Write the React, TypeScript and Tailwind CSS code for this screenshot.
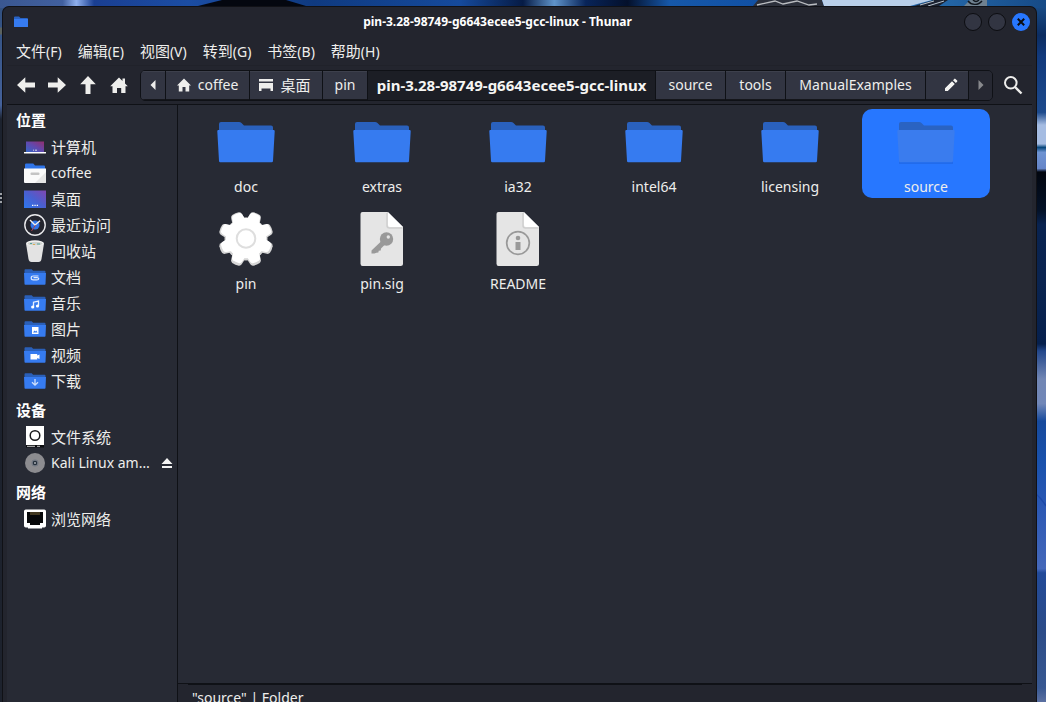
import type { ReactNode } from "react";

const LINE = "border-[#0f1116]";

function Wallpaper() {
  return (
    <svg className="absolute inset-0 h-full w-full" viewBox="0 0 1046 702" preserveAspectRatio="none" aria-hidden="true">
      <defs>
        <linearGradient id="wp-top" x1="0" x2="1" y1="0" y2="0">
          <stop offset="0" stopColor="#3a5790" />
          <stop offset="0.06" stopColor="#41609f" />
          <stop offset="0.073" stopColor="#8fb0ee" />
          <stop offset="0.09" stopColor="#1a3f92" />
          <stop offset="0.18" stopColor="#1b4da3" />
          <stop offset="0.3" stopColor="#0f3a80" />
          <stop offset="0.44" stopColor="#154a9c" />
          <stop offset="0.5" stopColor="#061b45" />
          <stop offset="0.53" stopColor="#5f93c9" />
          <stop offset="0.56" stopColor="#082459" />
          <stop offset="0.6" stopColor="#04102b" />
          <stop offset="0.64" stopColor="#1658a9" />
          <stop offset="0.72" stopColor="#1151a5" />
          <stop offset="0.9" stopColor="#2467a8" />
          <stop offset="1" stopColor="#164a86" />
        </linearGradient>
        <linearGradient id="wp-left" x1="0" x2="0" y1="0" y2="1">
          <stop offset="0" stopColor="#31507f" />
          <stop offset="0.14" stopColor="#44619a" />
          <stop offset="0.16" stopColor="#1c222e" />
          <stop offset="1" stopColor="#1d222d" />
        </linearGradient>
        <linearGradient id="wp-right" gradientUnits="userSpaceOnUse" x1="0" x2="0" y1="0" y2="702">
          <stop offset="0" stopColor="#1b528e" />
          <stop offset="0.05" stopColor="#0c2d61" />
          <stop offset="0.08" stopColor="#123a7c" />
          <stop offset="0.16" stopColor="#1d4a8c" />
          <stop offset="0.178" stopColor="#a5bce2" />
          <stop offset="0.205" stopColor="#a5bce2" />
          <stop offset="0.21" stopColor="#07467a" />
          <stop offset="0.217" stopColor="#6e93d2" />
          <stop offset="0.24" stopColor="#6585c8" />
          <stop offset="0.245" stopColor="#02060f" />
          <stop offset="0.3" stopColor="#041228" />
          <stop offset="0.32" stopColor="#092350" />
          <stop offset="0.4" stopColor="#0a2450" />
          <stop offset="0.49" stopColor="#06204d" />
          <stop offset="0.5" stopColor="#23478a" />
          <stop offset="0.54" stopColor="#7186b4" />
          <stop offset="0.575" stopColor="#7187b8" />
          <stop offset="0.6" stopColor="#174a9c" />
          <stop offset="0.66" stopColor="#1a52ad" />
          <stop offset="0.72" stopColor="#2b58b4" />
          <stop offset="0.81" stopColor="#4568ba" />
          <stop offset="0.816" stopColor="#224a99" />
          <stop offset="0.9" stopColor="#2c4c88" />
          <stop offset="0.98" stopColor="#385891" />
          <stop offset="1" stopColor="#5b70a1" />
        </linearGradient>
      </defs>
      <rect width="1046" height="702" fill="url(#wp-top)" />
      <rect y="8" width="4" height="694" fill="url(#wp-left)" />
      <path d="M198 6 222 0 286 0 306 6Z" fill="#04070f" />
      <path d="M753 6 758 0h64l2 6Z" fill="#2b2f3a" />
      <path d="M757 5 775 1l8 3 14-3 12 4 8-1" fill="none" stroke="#b9bcc0" strokeWidth="1.3" />
      <path d="M822 0h110l-22 6h-86Z" fill="#b9cfe9" />
      <path d="M914 6 934 0h14l-9 6Z" fill="#1b2230" />
      <path d="M920 5 934 1M928 6 944 1" stroke="#b9c4cf" strokeWidth="1" />
      <path d="M964 6 970 0h17v6Z" fill="#6f8190" />
      <path d="M968 1c3 4 10 5 14 0M973 0c2 2 4 2 6 0" fill="none" stroke="#10151c" strokeWidth="1.4" />
      <rect x="1035" y="8" width="11" height="694" fill="url(#wp-right)" />
      <path d="M1036 494q5 4 10 12" fill="none" stroke="#1d49a8" strokeWidth="1.5" />
      <path d="M0 194h2M0 198h2M0 202h2" stroke="#c9cbd0" strokeWidth="1.5" />
      <path d="M0 31h3" stroke="#5b625e" strokeWidth="7" />
    </svg>
  );
}

function FolderGlyph({ selected = false }: { selected?: boolean }) {
  return (
    <svg width="64" height="64" viewBox="0 0 64 64" aria-hidden="true">
      {selected && <path d="M5 22h54v33H5z" fill="#1d62dd" opacity=".55" />}
      <path d="M5 24V15q0-2 2-2h18q1.500 0 2.500 1l2.500 2.500H57q2 0 2 2V24Z" fill={selected ? "#2a63c2" : "#2a61bd"} />
      <path d="M4.500 21h55q1.300 0 1.200 1.300L59 52q-.1 1.300-1.300 1.300H6.300Q5.100 53.300 5 52L3.300 22.300Q3.200 21 4.500 21Z" fill={selected ? "#3a7cee" : "#367bf0"} />
    </svg>
  );
}

const TEETH = [22.5, 67.5, 112.5, 157.5, 202.5, 247.5, 292.5, 337.5];

function Teeth({ fill }: { fill: string }) {
  return (
    <g fill={fill}>
      <circle cx="32" cy="32" r="21.500" />
      {TEETH.map((angle) => (
        <path key={angle} transform={`rotate(${angle} 32 32)`} d="M25 14 26.300 7Q26.800 5 28.500 4.600 32 3.800 35.500 4.600 37.200 5 37.700 7L39 14Z" />
      ))}
    </g>
  );
}

function GearGlyph() {
  return (
    <svg width="64" height="64" viewBox="0 0 64 64" aria-hidden="true">
      <g transform="translate(0 1)">
        <Teeth fill="#d6d6d6" />
      </g>
      <g transform="translate(2 2) scale(.94)">
        <Teeth fill="#ffffff" />
      </g>
      <circle cx="32" cy="32.500" r="9.300" fill="#fff" stroke="#dedede" strokeWidth="2" />
    </svg>
  );
}

function Sheet({ children }: { children: ReactNode }) {
  return (
    <svg width="64" height="64" viewBox="0 0 64 64" aria-hidden="true">
      <path d="M12.500 6H37.500L53 21V57.500Q53 60 50.500 60h-38Q10.500 60 10.500 57.500V8Q10.500 6 12.500 6Z" fill="#e5e5e5" />
      <path d="M37 7v12.500Q37 22 39.500 22H52.500" fill="none" stroke="#cfcfcf" strokeWidth="1.500" />
      <path d="M38 6 53 21H40q-2 0-2-2Z" fill="#fff" />
      {children}
    </svg>
  );
}

function KeyGlyph() {
  return (
    <Sheet>
      <circle cx="36.500" cy="33" r="6.700" fill="#999" />
      <circle cx="38.300" cy="31" r="1.700" fill="#e5e5e5" />
      <path d="m31.500 35 3.500 3.500-4 4-.3 2-2 .2-.3 1.800-2 .3-2 .8H21.500v-3Z" fill="#999" />
    </Sheet>
  );
}

function InfoGlyph() {
  return (
    <Sheet>
      <circle cx="32" cy="37" r="11.300" fill="none" stroke="#999" strokeWidth="1.700" />
      <circle cx="32" cy="32" r="2.300" fill="#999" />
      <path d="M29.500 36h5v8h-5z" fill="#999" />
    </Sheet>
  );
}

function SmallIcon({ children }: { children: ReactNode }) {
  return (
    <svg width="24" height="24" viewBox="0 0 24 24" className="shrink-0" aria-hidden="true">
      {children}
    </svg>
  );
}

function SmallFolder({ children }: { children?: ReactNode }) {
  return (
    <SmallIcon>
      <path d="M1.500 6.500V5.200q0-.9.900-.9h6.300l1.400 1.500h11.500q.9 0 .9.900v2H1.500Z" fill="#2a5fb8" />
      <path d="M1 8h22l-.5 11q0 .8-.8.800H2.300q-.8 0-.8-.8Z" fill="#367bf0" />
      {children}
    </SmallIcon>
  );
}

const GRADIENT = (
  <defs>
    <linearGradient id="screen" x1="0" x2="1" y1="1" y2="0">
      <stop offset="0" stopColor="#2d78ee" />
      <stop offset="0.5" stopColor="#4a5fd0" />
      <stop offset="1" stopColor="#8047b0" />
    </linearGradient>
    <linearGradient id="laptop" x1="0" x2="1" y1="1" y2="0">
      <stop offset="0" stopColor="#3568c8" />
      <stop offset="0.5" stopColor="#6148ae" />
      <stop offset="1" stopColor="#932f6d" />
    </linearGradient>
  </defs>
);

const icons: Record<string, ReactNode> = {
  computer: (
    <SmallIcon>
      {GRADIENT}
      <path d="M3 6.500h18V17H3z" fill="url(#laptop)" />
      <path d="M10 15.200h1m1 0h2" stroke="#d9d9e8" />
      <path d="M1 17h22v1q0 .6-.6.600H1.600q-.6 0-.6-.6Z" fill="#fff" />
    </SmallIcon>
  ),
  home: (
    <SmallIcon>
      <path d="M2 8V3.800q0-1.300 1.300-1.300h7L12 4.500h9q1 0 1 1V9H2Z" fill="#2f74e8" />
      <path d="M1 7.500h22V21q0 1-1 1H2q-1 0-1-1Z" fill="#fafafa" />
      <path d="M23 11v10q0 1-1 1H12Z" fill="#e6e6e6" />
      <rect x="7.500" y="11.500" width="9" height="2.600" rx="1" fill="#c4c4c4" />
    </SmallIcon>
  ),
  desktop: (
    <SmallIcon>
      {GRADIENT}
      <path d="M1 3.500h22V21H1z" fill="url(#screen)" />
      <path d="M9 18.300h1.400m1 0h1.300m1 0H15" stroke="#fff" strokeWidth="1.200" />
    </SmallIcon>
  ),
  recent: (
    <SmallIcon>
      <circle cx="12" cy="12" r="10.200" fill="#24252e" stroke="#e9e9ec" strokeWidth="1.400" />
      <circle cx="12" cy="12" r="4.500" fill="#2f74e8" />
      <path d="m7 7 5 5 5-4.300" fill="none" stroke="#eee" strokeWidth="1.400" />
      <path d="m12.500 12-4 6" stroke="#a6404f" />
    </SmallIcon>
  ),
  trash: (
    <SmallIcon>
      <path d="M3 4.500 5.500 20q.5 3 3 3h7q2.500 0 3-3L21 4.500Z" fill="#e3e3e3" />
      <ellipse cx="12" cy="4.200" rx="9" ry="2.900" fill="#f4f4f4" />
      <ellipse cx="12" cy="4.600" rx="7.500" ry="1.900" fill="#cfd2cf" />
      <path d="M7 4.500h2m5 .5h3" stroke="#55a59a" />
      <path d="M10 5.500h2" stroke="#d7ae55" />
    </SmallIcon>
  ),
  documents: (
    <SmallFolder>
      <path d="M15.500 11H10.300q-2.100 0-2.100 1.900t2.100 1.900h3.600q1.800 0 1.800-1.100t-1.800-1H10.500" fill="none" stroke="#dce8fc" strokeWidth="1.200" />
    </SmallFolder>
  ),
  music: (
    <SmallFolder>
      <path d="M10.500 15.800v-4.600L15.500 10v4.800" fill="none" stroke="#e6effe" strokeWidth="1.300" />
      <circle cx="9.700" cy="16" r="1.600" fill="#fff" />
      <circle cx="14.500" cy="15" r="1.600" fill="#fff" />
    </SmallFolder>
  ),
  pictures: (
    <SmallFolder>
      <path d="M9 10h6.500v7H9z" fill="#fff" />
      <path d="m10 15.500 1.500-2 1 1 .8-1 1.200 2Z" fill="#367bf0" />
    </SmallFolder>
  ),
  videos: (
    <SmallFolder>
      <path d="M7.500 11h6.700v1.500l2.300-1v4.600l-2.300-1v1.500H7.500z" fill="#fff" />
    </SmallFolder>
  ),
  downloads: (
    <SmallFolder>
      <path d="M12 10v6m-3-2.800 3 3 3-3" fill="none" stroke="#cfe0fc" strokeWidth="1.300" />
    </SmallFolder>
  ),
  disk: (
    <SmallIcon>
      <path d="M3 1h18v19H3z" fill="#fff" />
      <path d="M3 20h18v2.500H3z" fill="#0c0d10" />
      <path d="M4 21.300h8m2 0h3" stroke="#c8c8c8" />
      <circle cx="12" cy="10.500" r="4.800" fill="#fff" stroke="#1a1a1c" strokeWidth="1.500" />
    </SmallIcon>
  ),
  disc: (
    <SmallIcon>
      <circle cx="12" cy="12" r="10" fill="#8c8c90" />
      <circle cx="12" cy="12" r="2.900" fill="#25303c" stroke="#737984" strokeWidth="1.200" />
      <circle cx="12" cy="12" r="1" fill="#a9adb5" />
    </SmallIcon>
  ),
  network: (
    <SmallIcon>
      <path d="M2.800 2.500h18.400Q23 2.500 23 4.300v14.400q0 1.800-1.800 1.800H19v1H5v-1H2.800Q1 20.500 1 18.700V4.300q0-1.800 1.800-1.800Z" fill="#fff" />
      <path d="M4 5h16v11h-3v2H7v-2H4Z" fill="#07080a" />
      <path d="M8 5v3m2-3v3m2-3v3m2-3v3m2-3v3" stroke="#8d7440" strokeWidth=".9" />
    </SmallIcon>
  ),
};

const groups = [
  {
    title: "位置",
    items: [
      ["computer", "计算机"],
      ["home", "coffee"],
      ["desktop", "桌面"],
      ["recent", "最近访问"],
      ["trash", "回收站"],
      ["documents", "文档"],
      ["music", "音乐"],
      ["pictures", "图片"],
      ["videos", "视频"],
      ["downloads", "下载"],
    ],
  },
  {
    title: "设备",
    items: [
      ["disk", "文件系统"],
      ["disc", "Kali Linux am…"],
    ],
  },
  { title: "网络", items: [["network", "浏览网络"]] },
];

const isLatin = (label: string) => /^[A-Za-z]/.test(label);

function Sidebar() {
  return (
    <nav aria-label="Places" className={`w-[171px] shrink-0 space-y-px border-r ${LINE}`}>
      {groups.map((group) => (
        <section key={group.title}>
          <h2 className="flex h-[29px] items-center pl-[9px] text-[15px] font-bold text-white">{group.title}</h2>
          <ul>
            {group.items.map(([icon, label]) => (
              <li key={label} className="flex h-[26px] items-center pr-1">
                <a href="#" className="flex min-w-0 flex-1 items-center gap-1 pl-4">
                  {icons[icon]}
                  <span className={isLatin(label) ? "whitespace-nowrap" : "text-[15px] whitespace-nowrap"}>{label}</span>
                </a>
                {icon === "disc" && (
                  <button aria-label="Eject">
                    <svg width="12" height="12" viewBox="0 0 12 12" aria-hidden="true">
                      <path d="M6 1 11.500 7H.5ZM1 9h10v2H1Z" fill="#f3f3f3" />
                    </svg>
                  </button>
                )}
              </li>
            ))}
          </ul>
        </section>
      ))}
    </nav>
  );
}

function HomeShape() {
  return (
    <svg width="18" height="18" viewBox="0 0 18 18" fill="#eeeeec" aria-hidden="true">
      <path d="M9 1.500 12.500 5V2.500H15v5l2.800 2.800H15.500V17h-4.300v-5H7v5H2.500V10.300H.2Z" />
    </svg>
  );
}

function PlainHome() {
  return (
    <svg width="14" height="14" viewBox="0 0 14 14" fill="#eeeeec" aria-hidden="true">
      <path d="M7 .5 14 7.500h-1.800V13.500H8.500V9h-3v4.500H1.800V7.500H0Z" />
    </svg>
  );
}

function Arrow({ turn }: { turn: string }) {
  return (
    <svg width="18" height="18" viewBox="0 0 18 18" className={turn} fill="#eeeeec" aria-hidden="true">
      <path d="M8.300 1.200 0 9l8.300 7.800v-5.300H18v-5H8.300Z" />
    </svg>
  );
}

const segment = `h-[29px] shrink-0 flex items-center justify-center border-r ${LINE} bg-[#323542] shadow-[inset_0_1px_0_#3d404c,inset_0_-1px_0_#15161b]`;

function Toolbar() {
  return (
    <div className={`flex h-[39px] shrink-0 items-center border-b ${LINE} pl-[3px]`}>
      <button aria-label="Back" className="flex w-[31px] justify-center"><Arrow turn="" /></button>
      <button aria-label="Forward" className="flex w-[31px] justify-center"><Arrow turn="rotate-180" /></button>
      <button aria-label="Up" className="flex w-[31px] justify-center"><Arrow turn="rotate-90" /></button>
      <button aria-label="Home" className="flex w-[31px] justify-center"><HomeShape /></button>
      <div className={`ml-[6px] flex h-[31px] min-w-0 flex-1 items-center overflow-hidden rounded-[5px] border ${LINE}`}>
        <button aria-label="Scroll left" className={`${segment} w-[25px]`}>
          <svg width="6" height="10" viewBox="0 0 6 10" aria-hidden="true"><path d="M5.500 0v10L.5 5Z" fill="#eeeeec" /></svg>
        </button>
        <button className={`${segment} w-[84px] gap-[7px]`}><PlainHome />coffee</button>
        <button className={`${segment} w-[73px] gap-[7px] pr-[2px] text-[15px]`}>
          <svg width="14" height="12" viewBox="0 0 14 12" fill="#eeeeec" aria-hidden="true"><path d="M0 0h14v2.500H0ZM0 4h14v8h-2.500V9.500h-9V12H0Z" /></svg>
          桌面
        </button>
        <button className={`${segment} w-[45px]`}>pin</button>
        <button aria-current="page" className={`flex h-[29px] w-[288px] shrink-0 items-center justify-center border-r ${LINE} bg-[#1c1e25] text-[15px] font-bold text-[#f5f5f3]`}>
          pin-3.28-98749-g6643ecee5-gcc-linux
        </button>
        <button className={`${segment} w-[70px]`}>source</button>
        <button className={`${segment} w-[60px]`}>tools</button>
        <button className={`${segment} w-[140px]`}>ManualExamples</button>
        <button aria-label="Edit location" className={`${segment} min-w-[42px] flex-1 pl-2`}>
          <svg width="14" height="14" viewBox="0 0 14 14" fill="#f3f3f1" aria-hidden="true"><path d="M1 10.200 8 3.200 10.800 6 3.800 13H1ZM9 2.200l1.300-1.300q.6-.6 1.200 0l1.600 1.600q.6.600 0 1.200L11.800 5Z" /></svg>
        </button>
        <button aria-label="Scroll right" disabled className="flex h-[29px] w-[23px] shrink-0 items-center justify-center bg-[#262832]">
          <svg width="6" height="10" viewBox="0 0 6 10" aria-hidden="true"><path d="M.5 0v10l5-5Z" fill="#88898d" /></svg>
        </button>
      </div>
      <button aria-label="Search" className="flex w-[39px] justify-center">
        <svg width="20" height="20" viewBox="0 0 20 20" fill="none" stroke="#eeeeec" aria-hidden="true">
          <circle cx="7.800" cy="7.800" r="5.800" strokeWidth="2" />
          <path d="m12 12 6.500 6.500" strokeWidth="2.400" />
        </svg>
      </button>
    </div>
  );
}

const menus = [
  ["文件", "(F)"],
  ["编辑", "(E)"],
  ["视图", "(V)"],
  ["转到", "(G)"],
  ["书签", "(B)"],
  ["帮助", "(H)"],
];

const files = [
  ["doc", "folder"],
  ["extras", "folder"],
  ["ia32", "folder"],
  ["intel64", "folder"],
  ["licensing", "folder"],
  ["source", "selected"],
  ["pin", "gear"],
  ["pin.sig", "key"],
  ["README", "info"],
];

function FileGlyph({ kind }: { kind: string }) {
  if (kind === "gear") return <GearGlyph />;
  if (kind === "key") return <KeyGlyph />;
  if (kind === "info") return <InfoGlyph />;
  return <FolderGlyph selected={kind === "selected"} />;
}

export default function App() {
  return (
    <div className="relative flex h-screen overflow-hidden bg-[#1d222d] pt-[6px] pr-[9px] pl-[2px] font-['Noto_Sans','Noto_Sans_CJK_SC',sans-serif] text-[14px] leading-5 text-[#eeeeec]">
      <Wallpaper />
      <main className="relative flex min-w-0 flex-1 flex-col rounded-t-[7px] border-x border-t border-[#101116] bg-[#23252e] px-1">
        <header className="flex h-[30px] shrink-0 items-center">
          <div className="flex w-[72px] pl-[7px]">
            <svg width="14" height="12" viewBox="0 0 14 12" aria-hidden="true">
              <path d="M0 1.500Q0 .5 1 .5h4L6.500 2H13q1 0 1 1v2H0Z" fill="#2862c4" />
              <path d="M0 3h14v7.500q0 .5-.5.500H.5Q0 11 0 10.500Z" fill="#367bf0" />
            </svg>
          </div>
          <h1 className="min-w-0 flex-1 truncate pr-12 text-center text-[12px] font-bold text-white">
            pin-3.28-98749-g6643ecee5-gcc-linux - Thunar
          </h1>
          <div className="flex gap-[6px] pr-[2px]">
            <button aria-label="Minimize" className="size-[18px] rounded-full border border-[#0c0d11] bg-[#323542]" />
            <button aria-label="Maximize" className="size-[18px] rounded-full border border-[#0c0d11] bg-[#323542]" />
            <button aria-label="Close" className="flex size-[18px] items-center justify-center rounded-full bg-[#2777ff]">
              <svg width="8" height="8" viewBox="0 0 8 8" aria-hidden="true"><path d="m.8.8 6.400 6.400M7.200.8.8 7.200" stroke="#0b0d12" strokeWidth="2" /></svg>
            </button>
          </div>
        </header>
        <div role="menubar" className="flex h-[29px] shrink-0 items-center border-b border-[#20222a] pl-px">
          {menus.map(([label, key]) => (
            <button key={label} role="menuitem" className="px-2">
              <span className="text-[15px]">{label}</span>
              {key}
            </button>
          ))}
        </div>
        <Toolbar />
        <div className="flex min-h-0 flex-1 bg-[#272a34]">
          <Sidebar />
          <div className="flex min-w-0 flex-1 flex-col">
            <div className="flex min-h-0 flex-1 flex-wrap content-start gap-2 p-1">
              {files.map(([name, kind]) => (
                <button
                  key={name}
                  className={`flex w-32 flex-col items-center gap-1 rounded-[10px] pb-px ${kind === "selected" ? "bg-[#2777ff]" : ""}`}
                >
                  <FileGlyph kind={kind} />
                  <span>{name}</span>
                </button>
              ))}
            </div>
            <footer className={`h-[19px] shrink-0 border-t ${LINE} bg-[#23252e] px-[10px]`}>
              <p className={`border-t ${LINE} px-1 pt-[3px]`}>"source" | Folder</p>
            </footer>
          </div>
        </div>
      </main>
    </div>
  );
}
